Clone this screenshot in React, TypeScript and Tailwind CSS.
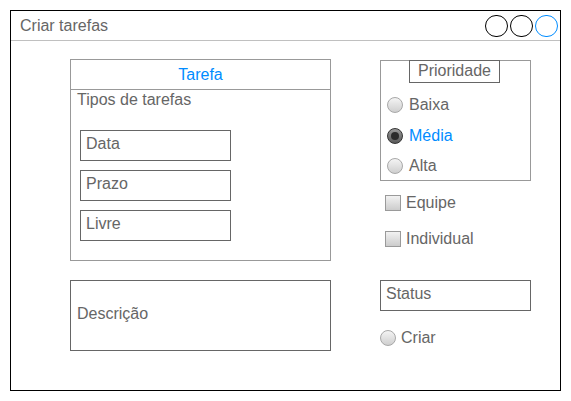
import React from "react";

const font = { fontFamily: '"Liberation Sans", Arial, sans-serif' };

function Radio({ checked = false }: { checked?: boolean }) {
  if (checked) {
    return (
      <div className="w-[16px] h-[16px] rounded-full border border-[#333] bg-gradient-to-b from-[#9a9a9a] to-[#5a5a5a] flex items-center justify-center shrink-0">
        <div className="w-[8px] h-[8px] rounded-full bg-[#2b2b2b]" />
      </div>
    );
  }
  return (
    <div className="w-[16px] h-[16px] rounded-full border border-[#a8a8a8] bg-gradient-to-b from-[#f4f4f4] to-[#cfcfcf] shrink-0" />
  );
}

function Check() {
  return (
    <div className="w-[16px] h-[16px] border border-[#9a9a9a] bg-gradient-to-b from-[#f2f2f2] to-[#cccccc] shrink-0" />
  );
}

function Field({ label }: { label: string }) {
  return (
    <div className="w-[151px] h-[31px] border border-[#666] pl-[5px] pt-[3px] leading-[20px]">
      {label}
    </div>
  );
}

export default function App() {
  return (
    <div className="w-[571px] h-[401px] bg-white p-[10px] text-[16px] text-[#666]" style={font}>
      <div className="w-[551px] h-[381px] border border-black flex flex-col">
        <div className="h-[30px] shrink-0 border-b border-[#c0c0c0] flex items-center justify-between pl-[9px] pr-[2px]">
          <span className="leading-[20px]">Criar tarefas</span>
          <div className="flex gap-[2px]">
            <div className="w-[23px] h-[22px] rounded-full border border-black" />
            <div className="w-[23px] h-[22px] rounded-full border border-black" />
            <div className="w-[23px] h-[22px] rounded-full border border-[#008cff]" />
          </div>
        </div>
        <div className="flex pl-[59px]">
          <div className="w-[261px] mt-[18px] flex flex-col">
            <div className="h-[202px] border border-[#999] flex flex-col">
              <div className="h-[30px] border-b border-[#999] flex items-center justify-center text-[#008cff] leading-[20px]">
                Tarefa
              </div>
              <div className="pl-[6px] leading-[20px]">Tipos de tarefas</div>
              <div className="ml-[9px] mt-[20px] flex flex-col gap-[9px]">
                <Field label="Data" />
                <Field label="Prazo" />
                <Field label="Livre" />
              </div>
            </div>
            <div className="mt-[19px] h-[71px] border border-[#666] flex items-center pl-[6px] pb-[3px] leading-[20px]">
              Descrição
            </div>
          </div>
          <div className="w-[151px] ml-[49px] mt-[19px] flex flex-col">
            <div className="h-[121px] border border-[#999] flex flex-col">
              <div className="ml-[28px] -mt-px w-[91px] h-[23px] border border-[#666] flex items-center justify-center pb-[2px] leading-[20px]">
                Prioridade
              </div>
              <div className="mt-[7px] flex flex-col pl-[6px]">
                <div className="h-[30px] flex items-center gap-[6px] leading-[20px]">
                  <Radio />
                  <span>Baixa</span>
                </div>
                <div className="h-[31px] flex items-center gap-[6px] leading-[20px]">
                  <Radio checked />
                  <span className="text-[#008cff]">Média</span>
                </div>
                <div className="h-[30px] flex items-center gap-[6px] leading-[20px]">
                  <Radio />
                  <span>Alta</span>
                </div>
              </div>
            </div>
            <div className="mt-[7px] flex flex-col gap-[6px] pl-[5px]">
              <div className="h-[30px] flex items-center gap-[5px] leading-[20px]">
                <Check />
                <span>Equipe</span>
              </div>
              <div className="h-[30px] flex items-center gap-[5px] leading-[20px]">
                <Check />
                <span>Individual</span>
              </div>
            </div>
            <div className="mt-[26px]">
              <Field label="Status" />
            </div>
            <div className="mt-[12px] h-[30px] flex items-center gap-[5px] leading-[20px]">
              <Radio />
              <span>Criar</span>
            </div>
          </div>
        </div>
      </div>
    </div>
  );
}
